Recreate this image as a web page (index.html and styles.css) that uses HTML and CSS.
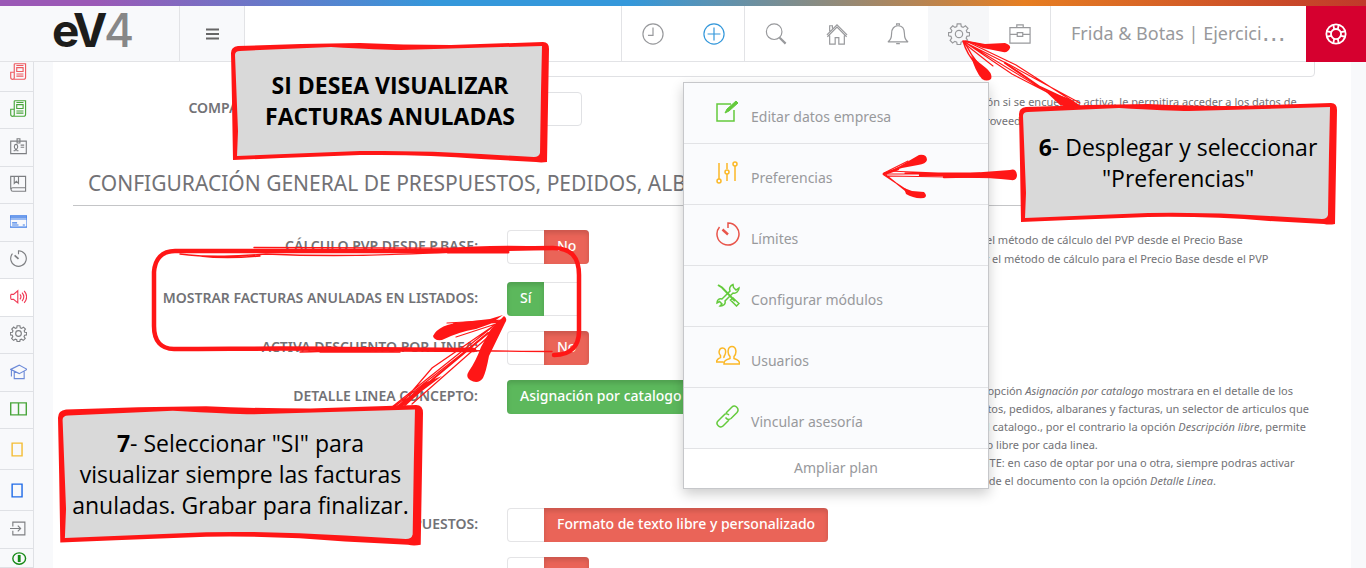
FILE: index.html
```html
<!DOCTYPE html>
<html lang="es">
<head>
<meta charset="utf-8">
<title>eV4 - Preferencias</title>
<link rel="stylesheet" href="styles.css">
</head>
<body>
<svg class="defs" aria-hidden="true">
  <defs>
    <symbol id="i-gear" viewBox="0 0 24 24"><path d="M10 1h4l.5 3 2 .8L19 3l2.800 2.800L20 8.200l.8 2 2.700.3v3.500l-2.900.5-.8 2 1.700 2.500-2.700 2.700-2.500-1.700-2 .8-.5 2.700h-3.800l-.5-2.700-2-.8-2.500 1.700-2.700-2.700L4 16.500l-.8-2L.5 14v-3.500l2.900-.3.8-2L2.500 5.800 5.200 3l2.400 1.800 2-.8z"/><circle cx="12" cy="12" r="4"/></symbol>
    <symbol id="i-timer" viewBox="0 0 24 24"><path d="M12 6V1a11 11 0 1 1-8.500 4"/><path d="m6.500 7.500 5.500 5" stroke-width="2.400"/></symbol>
    <symbol id="i-news" viewBox="0 0 24 24"><path d="M6 1h16v19a3 3 0 0 1-3 3H4a3 3 0 0 1-3-3v-7h5v7a2.500 2.500 0 0 1-3 3M6 13V1M9.500 6.500h9V12h-9zM9 3.500h10M9 15.500h10M9 18.500h10"/></symbol>
  </defs>
</svg>
<div class="app">
  <div class="stripe"></div>
  <header class="topbar">
    <a class="brand" href="#" aria-label="eV4">
      <svg width="84" height="48" viewBox="0 0 84 48"><text class="brand-e" x="0" y="37">e</text><text class="brand-v" x="21" y="37">V</text><text class="brand-4" x="52" y="37">4</text></svg>
    </a>
    <button class="burger" aria-label="Menú"><svg width="13" height="12" viewBox="0 0 13 12"><path d="M0 1.500h13M0 6h13M0 10.500h13" stroke-width="2"/></svg></button>
    <nav class="tools">
      <div class="group">
        <button class="tool" aria-label="Recientes"><svg width="22" height="22" viewBox="0 0 24 24"><circle cx="12" cy="12" r="11"/><path d="M12 5v8.500H6.500"/></svg></button>
        <button class="tool add" aria-label="Añadir"><svg width="22" height="22" viewBox="0 0 24 24"><circle cx="12" cy="12" r="11"/><path d="M12 5v14M5 12h14"/></svg></button>
      </div>
      <div class="group">
        <button class="tool" aria-label="Buscar"><svg width="22" height="22" viewBox="0 0 24 24"><circle cx="10" cy="9.500" r="8.500"/><path d="m16 16 6.500 6.500" stroke-width="2.400"/></svg></button>
        <button class="tool" aria-label="Inicio"><svg width="22" height="22" viewBox="0 0 24 24"><path d="M1 13 12 2l11 11M1.500 15 12 4.500 22.500 15M4 9V3h3v3M4 13.500V23h6v-7h4v7h6v-9.500"/></svg></button>
        <button class="tool" aria-label="Avisos"><svg width="22" height="22" viewBox="0 0 24 24"><path d="M1 20.500c3-1.500 4-4 4-9C5 6 8 3 12 3s7 3 7 8.500c0 5 1 7.500 4 9zM10.500 2.500V1h3v1.500M10 22.500h4"/></svg></button>
        <button class="tool active" aria-label="Configuración"><svg width="22" height="22"><use href="#i-gear"/></svg></button>
        <button class="tool" aria-label="Empresas"><svg width="22" height="22" viewBox="0 0 24 24"><path d="M1 5h22v17H1zM8.500 5V2h7v3M1 12.500h8M15 12.500h8M9 10.500h6v4H9z"/></svg></button>
      </div>
    </nav>
    <div class="company">Frida &amp; Botas | Ejercici<span class="dots">…</span></div>
    <button class="help-btn" aria-label="Ayuda"><svg width="22" height="22" viewBox="0 0 24 24"><circle cx="12" cy="12" r="10.500"/><circle cx="12" cy="12" r="5.500"/><path d="m9 2 1 4.500M15 2l-1 4.500M9 22l1-4.500M15 22l-1-4.500M2 9l4.500 1M2 15l4.500-1M22 9l-4.500 1M22 15l-4.500-1"/></svg></button>
  </header>

  <div class="body">
    <nav class="side">
      <a class="s red" href="#"><svg><use href="#i-news"/></svg></a>
      <a class="s green" href="#"><svg><use href="#i-news"/></svg></a>
      <a class="s" href="#"><svg viewBox="0 0 24 24"><path d="M1 4.500h22V22H1zM10 1h4v6h-4zM5 18h2l1-2c-3-2-2-7 .5-7s3.500 5 .5 7l1 2h2M15 10h5M15 13h5"/></svg></a>
      <a class="s" href="#"><svg viewBox="0 0 24 24"><path d="M1 20V2h21v21H4a2.500 2.500 0 0 1 0-5h18M6 2v10l3-3 3 3V2"/></svg></a>
      <a class="s blue" href="#"><svg viewBox="0 0 24 24"><path d="M0 4h24v16H0zM0 6h24M0 8.500h24M3 14h7M3 17h9M18 17h3"/></svg></a>
      <a class="s" href="#"><svg><use href="#i-timer"/></svg></a>
      <a class="s pink on" href="#"><svg viewBox="0 0 24 24"><path d="M1 9v6M1 9h4l6-5v17l-6-5H1M14 9q3 3 0 7M17 6.500q5 6 0 12M20 4q7 8.500 0 17"/></svg></a>
      <a class="s" href="#"><svg><use href="#i-gear"/></svg></a>
      <a class="s indigo" href="#"><svg viewBox="0 0 24 24"><path d="m1 9 12-6 11 6-11 6zM6 12v10h14V12M2 10v9"/></svg></a>
      <a class="s green" href="#"><svg viewBox="0 0 24 24"><path d="M1 4h22v17H1zM12 4v17" stroke-width="2"/></svg></a>
      <a class="s tall yellow" href="#"><svg viewBox="0 0 24 24"><path d="M3 3h14v18H3z" stroke-width="2"/></svg></a>
      <a class="s tall royal" href="#"><svg viewBox="0 0 24 24"><path d="M3 3h14v18H3z" stroke-width="2"/></svg></a>
      <a class="s" href="#"><svg viewBox="0 0 24 24"><path d="M4 9V3h17v18H4v-6M0 12h15M11 8l4 4-4 4"/></svg></a>
      <a class="s last" href="#"><svg viewBox="0 0 24 24"><ellipse cx="13" cy="12" rx="9" ry="8" stroke-width="2"/><path d="M13 7v10" stroke-width="4"/></svg></a>
    </nav>

    <main class="panel">
      <div class="field-row"><input class="wide" type="text" aria-label="Descripción"></div>
      <div class="row">
        <label class="lbl" for="comp">COMPARTIR CLIENTES CON PROVEEDORES:</label>
        <div><input class="short" id="comp" type="text"></div>
        <p class="help"><span>Dicha opción si se encuentra activa, le permitira acceder a los datos de</span><span>de otros proveedores.</span></p>
      </div>
      <h2 class="title">CONFIGURACIÓN GENERAL DE PRESPUESTOS, PEDIDOS, ALBARANES</h2>
      <div class="row">
        <span class="lbl" id="l1">CÁLCULO PVP DESDE P.BASE:</span>
        <div><button class="toggle no" aria-labelledby="l1"><span>No</span></button></div>
        <p class="help"><span>Si: Activar el método de cálculo del PVP desde el Precio Base</span><span>No: Activar el método de cálculo para el Precio Base desde el PVP</span></p>
      </div>
      <div class="row">
        <span class="lbl" id="l2">MOSTRAR FACTURAS ANULADAS EN LISTADOS:</span>
        <div><button class="toggle yes" aria-labelledby="l2"><span>Sí</span></button></div>
      </div>
      <div class="row">
        <span class="lbl" id="l3">ACTIVA DESCUENTO POR LINEA:</span>
        <div><button class="toggle no" aria-labelledby="l3"><span>No</span></button></div>
      </div>
      <div class="row">
        <span class="lbl" id="l4">DETALLE LINEA CONCEPTO:</span>
        <div><button class="toggle yes" aria-labelledby="l4"><span>Asignación por catalogo</span></button></div>
        <p class="help long"><span>Usando la opción <i>Asignación por catalogo</i> mostrara en el detalle de los</span><span>presupuestos, pedidos, albaranes y facturas, un selector de articulos que</span><span>contiene el catalogo., por el contrario la opción <i>Descripción libre</i>, permite</span><span>poner texto libre por cada linea.</span><span>IMPORTANTE: en caso de optar por una o otra, siempre podras activar</span><span>ambas desde el documento con la opción <i>Detalle Linea</i>.</span></p>
      </div>
      <div class="row">
        <span class="lbl" id="l5">FORMATO PRESUPUESTOS:</span>
        <div><button class="toggle no" aria-labelledby="l5"><span>Formato de texto libre y personalizado</span></button></div>
      </div>
      <div class="row">
        <span class="lbl" id="l6">DESACTIVAR SUPLEMENTOS EN PEDIDOS DE COMPRA:</span>
        <div><button class="toggle no" aria-labelledby="l6"><span>No</span></button></div>
      </div>
    </main>
  </div>

  <nav class="menu">
    <a class="mi lime" href="#"><svg viewBox="0 0 24 24"><path d="M15 4H1v17h17V10"/><path d="m9 13 2-4L20 1l2 2-9 8z" fill="currentColor" stroke-width="1"/></svg><span>Editar datos empresa</span></a>
    <a class="mi amber" href="#"><svg viewBox="0 0 24 24"><path d="M3 2v16M11 2v6M11 13v7M19 5v15"/><circle cx="3" cy="20" r="2"/><circle cx="11" cy="11" r="2"/><circle cx="19" cy="3" r="2"/></svg><span>Preferencias</span></a>
    <a class="mi rose" href="#"><svg><use href="#i-timer"/></svg><span>Límites</span></a>
    <a class="mi lime" href="#"><svg viewBox="0 0 24 24"><path d="m2 2 4 2.500L19 18" stroke-width="2"/><path d="m17 15 6 5.500-2.500 2.500-6-6zM17 1.500c-3 1-4 4-3 6.500l-8 8c-3-1-5 1-5 4l2.500-1.500L6 21l-2 2c3 .5 6-2 5-5l8-8c3 1 6-2 6-5l-3 2-2.500-2.500z"/></svg><span>Configurar módulos</span></a>
    <a class="mi amber" href="#"><svg viewBox="0 0 24 24"><path d="M8 20h15.500c0-3-1-4-5.500-5.500v-2c3-3 2.500-10-2-10s-5 7-2 10v2C9 16 8 17 8 20zM7.500 18H.5c0-2 .5-3 4-4.500v-2C2 9 3 4 6.500 4 9 4 10 6 9.500 9S7.500 12 8 14"/></svg><span>Usuarios</span></a>
    <a class="mi lime" href="#"><svg viewBox="0 0 24 24"><path d="m10 8 6-6c3-3 8 2 5 5.500l-6 6c-2 1.500-4 1-5.500-1M13 10c-2-2-4-1.500-5 0l-6 6c-3 3 2 8 5 5l6-6"/></svg><span>Vincular asesoría</span></a>
    <a class="plan" href="#">Ampliar plan</a>
  </nav>

  <svg class="ink" width="1366" height="568" viewBox="0 0 1366 568" aria-hidden="true">
    <g fill="none" stroke="#ff1616" stroke-linecap="round">
      <path stroke-width="4.500" d="M554 355c18 0 25-10 25-24v-56c0-18-8-27-26-27-45 0-85 3-140 3H175c-13 0-20 8-21 21v54c0 15 7 23 20 23 60 0 100-1 170 0l130 1"/>
      <path stroke-width="3" d="M448 250q35-4 100-2M448 252h60"/>
      <path stroke-width="1.400" d="M254 247.500c90 1 180 0 280 1M180 254c30 4 60 2 86 0 90 4 150-1 220-3M200 256q25 3 60 0M300 352c90-3 170-1 252-.500M320 352h80"/>
      <path stroke-width="1.400" d="M963 41l20 4M963 41q4 14 14 24M965 43q6 12 14 22"/>
      <path stroke-width="1.100" d="M965 42l100 61M966 41l50 24 58 37M966 43l46 31 60 31M970 45l40 20 70 38M965 44l28 22"/>
      <path stroke-width="2" d="M1005 63l35 24 32 15"/>
      <path stroke-width="1.100" d="M883 174l132 0M888 171l100 4M888 176l120 2M884 175l24 16M884 173l24-12M905 173h75M886 175l20 16"/>
      <path stroke-width="2.400" d="M884 174l14-5M920 175l60 0M944 177l50-1"/>
      <path stroke-width="1.200" d="M501 320L392 407M500 324L394 407M502 320l-70 48-30 35M496 330l-84 74M501 320l-54 3M498 321l-50 9M499 323l-43 14"/>
      <path stroke-width="2" d="M500 322l-46 2M501 322l-21 40"/>
      <path stroke-width="2" d="M488 333l-55 46-28 26"/>
    </g>
    <g fill="#ff1616">
      <path d="M963 40l22 4 20-1q6 2 5 5-2 5-7 4l-20-4zM971 56l15 12q7 6 5 11-4 3-9 0-7-8-11-23zM1044 90l26 9 11 7-7 3-14-4z"/>
      <path d="M886 173l14-7 19-11q8-1 8 5-1 4-9 5l-16 3zM904 188l8 3 12 1q4 4 0 6-10 1-18-4zM970 173l40-3q6-2 7 5 0 6-6 5l-41-4z"/>
      <path d="M503 315l-13 4-27 3q-24 2-30 14 1 5 9 4 16-8 34-11l14-5zM504 316q4 3 1 7l-16 33q-3 16-6 22-5 7-13 2-5-3-1-9 7-10 12-24l10-18zM442 376l-20 15-20 16-7 0 15-11 14-13z"/>
    </g>
  </svg>

  <section class="note n1">
    <svg viewBox="0 0 318 122" preserveAspectRatio="none"><path class="edge" d="M0 11Q0 5 7 4L70 2 129 1Q170 3 220 3L312 0Q318 0 318 7L316 121Q310 122 305 121L250 118Q190 113 129 114L50 117 2 119 1 60z"/><path class="paper" d="M4 13Q4 9 9 9L100 5Q150 8 170 8L311 4 310 50 309 112Q308 116 303 116L250 113Q190 109 129 110L6 115 7 90z"/></svg>
    <p><b>SI DESEA VISUALIZAR<br>FACTURAS ANULADAS</b></p>
  </section>
  <section class="note n2">
    <svg viewBox="0 0 318 122" preserveAspectRatio="none"><path class="edge" d="M0 11Q0 5 7 4L70 2 129 1Q170 3 220 3L312 0Q318 0 318 7L316 121Q310 122 305 121L250 118Q190 113 129 114L50 117 2 119 1 60z"/><path class="paper" d="M4 13Q4 9 9 9L100 5Q150 8 170 8L311 4 310 50 309 112Q308 116 303 116L250 113Q190 109 129 110L6 115 7 90z"/></svg>
    <p><b>6</b>- Desplegar y seleccionar<br>"Preferencias"</p>
  </section>
  <section class="note n3">
    <svg viewBox="0 0 318 122" preserveAspectRatio="none"><path class="edge" d="M0 11Q0 5 7 4L70 2 129 1Q170 3 220 3L312 0Q318 0 318 7L316 121Q310 122 305 121L250 118Q190 113 129 114L50 117 2 119 1 60z"/><path class="paper" d="M4 13Q4 9 9 9L100 5Q150 8 170 8L311 4 310 50 309 112Q308 116 303 116L250 113Q190 109 129 110L6 115 7 90z"/></svg>
    <p><b>7</b>- Seleccionar "SI" para<br>visualizar siempre las facturas<br>anuladas. Grabar para finalizar.</p>
  </section>
</div>
</body>
</html>
```
FILE: styles.css
```css
* { box-sizing: border-box; }
body { margin: 0; font-family: "Noto Sans", "Open Sans", sans-serif; color: #727276; background: #f8f9fb; }
button { font: inherit; border: 0; margin: 0; padding: 0; background: none; cursor: pointer; }
a { text-decoration: none; color: inherit; }
svg { fill: none; stroke: currentColor; stroke-width: 1.3; display: block; }
p, h2 { margin: 0; }
.defs { position: absolute; width: 0; height: 0; }

.app { position: relative; display: flex; flex-direction: column; height: 100vh; overflow: hidden; }
.stripe { flex: none; height: 6px; background: linear-gradient(90deg, #9b59b6 7%, #3498db 32%, #3498db 46%, #e67e22 75%, #c0392b 100%); }

.topbar { flex: none; display: flex; height: 56px; background: #fff; border-bottom: 1px solid #e2e3e6; color: #98999c; }
.brand { width: 180px; display: flex; justify-content: center; padding: 4px 0 0 8px; background: #f8f9fb; border-right: 1px solid #e2e3e6; }
.brand text { stroke: none; font-family: Inter, sans-serif; font-size: 46px; }
.brand .brand-e, .brand .brand-v { fill: #1d1d1b; font-weight: 700; }
.brand .brand-4 { fill: #878787; font-weight: 500; }
.burger { width: 65px; display: flex; align-items: center; justify-content: center; background: #f8f9fb; border-right: 1px solid #e2e3e6; color: #666; }
.tools { display: flex; margin-left: auto; }
.group { display: flex; border-left: 1px solid #e2e3e6; }
.tool { width: 61px; display: flex; align-items: center; justify-content: center; color: #98999c; }
.tool.add { color: #3498db; }
.tool.active { background: #f6f7f9; }
.company { width: 256px; display: flex; align-items: center; padding: 0 0 2px 20px; border-left: 1px solid #e2e3e6; font-size: 18px; white-space: nowrap; }
.dots { font-family: "DejaVu Sans", sans-serif; font-size: 24px; line-height: 24px; }
.help-btn { width: 60px; height: 56px; display: flex; align-items: center; justify-content: center; background: #d6002f; color: #fff; }
.help-btn svg { stroke-width: 2; }

.body { flex: 1; min-height: 0; display: flex; overflow: hidden; }
.side { flex: none; width: 34px; margin-top: -8px; border-right: 1px solid #dfe1e5; }
.s { display: flex; align-items: center; height: 38px; padding: 0 0 3px 10px; border-bottom: 1px solid #dfe1e5; color: #7d7f82; }
.s:nth-child(even) { height: 37px; }
.s.tall { height: 41px; padding-bottom: 0; }
.s.last { height: 19px; padding-bottom: 0; color: #168a16; }
.s svg { width: 17px; height: 17px; stroke-width: 1.6; }
.s.red { color: #ee5a60; }
.s.green { color: #4aa63c; }
.s.blue { color: #3f7ee8; }
.s.pink { color: #f03a55; }
.s.indigo { color: #6c8ad8; }
.s.yellow { color: #f4bd35; }
.s.royal { color: #1f6be8; }
.s.on { background: #fff; }

.panel { flex: 1; min-width: 0; margin: 0 15px 0 19px; padding: 0 20px; background: #fff; }
.field-row { padding: 0 16px 15px 434px; }
.wide, .short { display: block; border: 1px solid #e0e1e4; border-radius: 4px; background: #fff; font: inherit; }
.wide { width: 100%; height: 34px; margin-top: -19px; }
.short { width: 75px; height: 34px; }
.row { display: grid; grid-template-columns: minmax(0, 405fr) minmax(0, 397fr) minmax(0, 398fr); column-gap: 29px; align-items: start; min-height: 35px; margin-bottom: 14px; }
.lbl { text-align: right; font-size: 14px; font-weight: 600; line-height: 20px; padding-top: 6px; white-space: nowrap; justify-self: end; }
.help { font-size: 11px; line-height: 19px; white-space: nowrap; }
.help.long { line-height: 18px; padding: 2px 0 4px; }
.help span { display: block; }
.title { font-size: 21px; line-height: 28px; font-weight: 400; margin: 39px 0 24px; padding: 0 0 8px 15px; border-bottom: 1px solid #c4c5c7; white-space: nowrap; overflow: hidden; }
.toggle { display: flex; height: 34px; border-radius: 4px; box-shadow: inset 0 0 0 1px #e4e4e6; background: #fff; color: #fff; font-size: 14px; font-weight: 500; white-space: nowrap; overflow: hidden; }
.toggle span { padding: 0 13px; line-height: 32px; height: 34px; box-shadow: inset 0 3px 5px rgba(0, 0, 0, .14); }
.toggle.no { padding-left: 37px; }
.toggle.no span { background: #ea6458; }
.toggle.yes { padding-right: 37px; }
.toggle.yes span { background: #5cb85c; }

.menu { position: absolute; left: 683px; top: 82px; width: 306px; background: #fafbfd; border: 1px solid #c6c7ca; box-shadow: 0 5px 12px rgba(0, 0, 0, .2); color: #98999c; font-size: 14px; }
.mi { display: flex; gap: 11px; height: 61px; padding: 17px 32px 0; border-bottom: 1px solid #e2e3e6; }
.mi svg { width: 24px; height: 24px; stroke-width: 1.5; }
.mi span { color: #98999c; line-height: 20px; padding-top: 7px; }
.lime { color: #64ca3c; }
.amber { color: #fbb827; }
.rose { color: #e8544a; }
.plan { display: block; height: 39px; line-height: 37px; text-align: center; background: #fff; }

.ink { position: absolute; left: 0; top: 0; stroke: none; pointer-events: none; }
.note { position: absolute; display: flex; align-items: center; justify-content: center; padding-bottom: 3px; text-align: center; font-family: "Open Sans", "Noto Sans", sans-serif; font-size: 23px; line-height: 31px; color: #000; }
.note svg { position: absolute; inset: 0; width: 100%; height: 100%; stroke: none; }
.note p { position: relative; white-space: nowrap; }
.edge { fill: #ff1616; }
.paper { fill: #d9d9d9; }
.n1 { left: 231px; top: 42px; width: 318px; height: 121px; }
.n2 { left: 1019px; top: 103px; width: 318px; height: 122px; }
.n3 { left: 58px; top: 405px; width: 365px; height: 141px; }
```
